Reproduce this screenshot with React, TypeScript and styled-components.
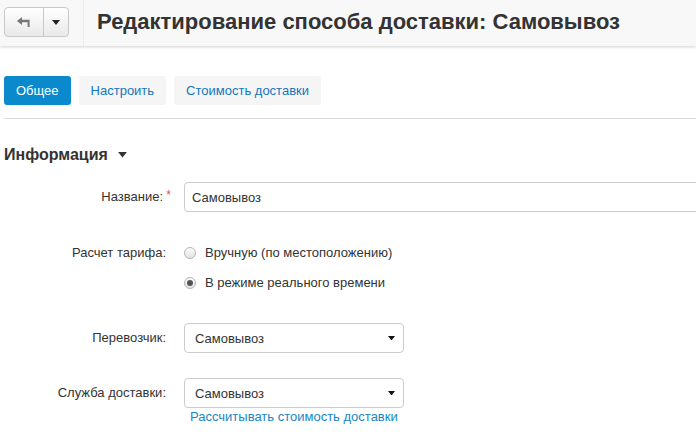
import React from "react";
import styled, { createGlobalStyle } from "styled-components";

const Global = createGlobalStyle`
  html, body { margin: 0; padding: 0; background: #fff; }
  body { font-family: "Liberation Sans", Arial, sans-serif; font-size: 13px; color: #333; overflow: hidden; }
  * { box-sizing: border-box; }
`;

const Page = styled.div`
  width: 696px;
  height: 437px;
  overflow: hidden;
`;

const Header = styled.header`
  height: 46px;
  background: #f8f8f8;
  box-shadow: 0 1px 3px rgba(0, 0, 0, 0.18);
  display: flex;
  align-items: stretch;
  padding-left: 4px;
`;

const BtnGroup = styled.div`
  display: flex;
  align-self: center;
  margin-top: -2px;
  height: 30px;
  border: 1px solid #c8c8c8;
  border-radius: 4px;
  overflow: hidden;
  background: linear-gradient(#ffffff, #e9e9e9);
`;

const GroupBtn = styled.div<{ $w: number; $sep?: boolean }>`
  width: ${(p) => p.$w}px;
  display: flex;
  align-items: center;
  justify-content: center;
  border-left: ${(p) => (p.$sep ? "1px solid #c8c8c8" : "none")};
`;

const VSep = styled.div`
  width: 1px;
  background: #ececec;
  margin-left: 14px;
`;

const Title = styled.h1`
  margin: 0 0 0 13px;
  align-self: center;
  margin-top: -2px;
  font-size: 22px;
  font-weight: bold;
  color: #333;
  white-space: nowrap;
`;

const Tabs = styled.div`
  display: flex;
  gap: 8px;
  margin: 30px 0 0 4px;
`;

const Tab = styled.div<{ $active?: boolean }>`
  height: 29px;
  padding: 0 12px;
  display: flex;
  align-items: center;
  border-radius: 3px;
  font-size: 13px;
  background: ${(p) => (p.$active ? "#0a89cc" : "#f5f5f5")};
  color: ${(p) => (p.$active ? "#fff" : "#1477bd")};
`;

const Divider = styled.hr`
  margin: 13px 0 0 4px;
  border: 0;
  border-top: 1px solid #d9d9d9;
`;

const Section = styled.div`
  display: flex;
  align-items: center;
  gap: 10px;
  margin: 27px 0 0 4px;
  font-size: 16px;
  font-weight: bold;
  color: #333;
`;

const Form = styled.div`
  display: flex;
  flex-direction: column;
`;

const Row = styled.div<{ $mt: number }>`
  display: grid;
  grid-template-columns: 166px 1fr;
  column-gap: 18px;
  align-items: start;
  margin-top: ${(p) => p.$mt}px;
`;

const Label = styled.div<{ $lh?: number; $req?: boolean }>`
  text-align: right;
  font-size: 13px;
  color: #333;
  line-height: ${(p) => p.$lh ?? 30}px;
  padding-right: ${(p) => (p.$req ? 3 : 0)}px;
  position: relative;
`;

const Star = styled.span`
  position: absolute;
  right: -5px;
  top: 0px;
  line-height: 26px;
  color: #d9534f;
  font-size: 12px;
`;

const TextInput = styled.div`
  height: 30px;
  width: 530px;
  border: 1px solid #ccc;
  border-radius: 4px;
  display: flex;
  align-items: center;
  padding-left: 7px;
  font-size: 13px;
  color: #333;
`;

const Radios = styled.div`
  display: flex;
  flex-direction: column;
  gap: 15px;
`;

const RadioRow = styled.div`
  display: flex;
  align-items: center;
  gap: 9px;
  font-size: 13px;
  line-height: 15px;
  color: #333;
`;

const Radio = styled.span<{ $checked?: boolean }>`
  width: 12px;
  height: 12px;
  border-radius: 50%;
  border: 1px solid #b5b5b5;
  background: linear-gradient(#fbfbfb, #e4e4e4);
  display: flex;
  align-items: center;
  justify-content: center;
  &::after {
    content: "";
    display: ${(p) => (p.$checked ? "block" : "none")};
    width: 6px;
    height: 6px;
    border-radius: 50%;
    background: #555;
  }
`;

const Select = styled.div`
  height: 30px;
  width: 220px;
  border: 1px solid #ccc;
  border-radius: 4px;
  display: flex;
  align-items: center;
  justify-content: space-between;
  padding: 0 8px 0 10px;
  font-size: 13px;
  color: #333;
`;

const Link = styled.a`
  display: block;
  margin: 1px 0 0 6px;
  color: #1a85c6;
  font-size: 13px;
  line-height: 16px;
  text-decoration: none;
`;

const Caret = ({ size = 8, color = "#333" }: { size?: number; color?: string }) => (
  <svg width={size} height={size / 2 + 1} viewBox="0 0 8 5">
    <path d="M0 0 H8 L4 5 Z" fill={color} />
  </svg>
);

const BackIcon = () => (
  <svg width="14" height="11" viewBox="0 0 14 11">
    <path d="M0 4 L5 0 V2.8 H12.6 V10 H10.6 V5.2 H5 V8 Z" fill="#777" />
  </svg>
);

export default function App() {
  return (
    <Page>
      <Global />
      <Header>
        <BtnGroup>
          <GroupBtn $w={38}>
            <BackIcon />
          </GroupBtn>
          <GroupBtn $w={25} $sep>
            <Caret size={8} color="#222" />
          </GroupBtn>
        </BtnGroup>
        <VSep />
        <Title>Редактирование способа доставки: Самовывоз</Title>
      </Header>
      <Tabs>
        <Tab $active>Общее</Tab>
        <Tab>Настроить</Tab>
        <Tab>Стоимость доставки</Tab>
      </Tabs>
      <Divider />
      <Section>
        Информация <Caret size={9} color="#333" />
      </Section>
      <Form>
        <Row $mt={18}>
          <Label $req>
            Название:<Star>*</Star>
          </Label>
          <TextInput>Самовывоз</TextInput>
        </Row>
        <Row $mt={33}>
          <Label $lh={15}>Расчет тарифа:</Label>
          <Radios>
            <RadioRow>
              <Radio />
              Вручную (по местоположению)
            </RadioRow>
            <RadioRow>
              <Radio $checked />
              В режиме реального времени
            </RadioRow>
          </Radios>
        </Row>
        <Row $mt={33}>
          <Label>Перевозчик:</Label>
          <Select>
            Самовывоз <Caret size={7} color="#111" />
          </Select>
        </Row>
        <Row $mt={25}>
          <Label>Служба доставки:</Label>
          <div>
            <Select>
              Самовывоз <Caret size={7} color="#111" />
            </Select>
            <Link>Рассчитывать стоимость доставки</Link>
          </div>
        </Row>
      </Form>
    </Page>
  );
}
